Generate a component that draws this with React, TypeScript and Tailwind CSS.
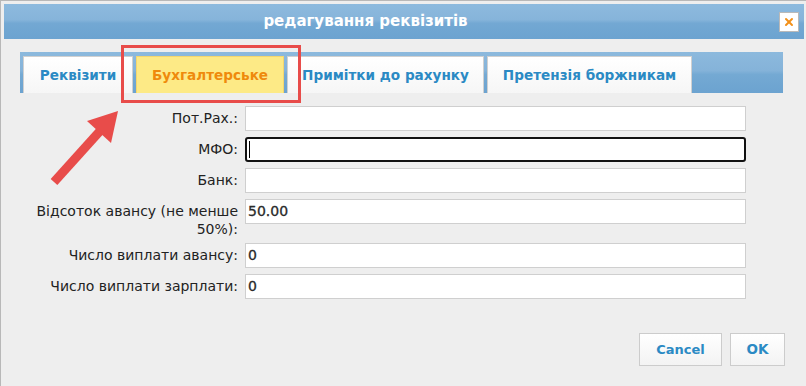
import React from "react";
import { X } from "lucide-react";

const tabs = [
  { label: "Реквізити", width: "w-[110px]", active: false },
  { label: "Бухгалтерське", width: "w-[148px]", active: true },
  { label: "Примітки до рахунку", width: "w-[197px]", active: false },
  { label: "Претензія боржникам", width: "w-[205px]", active: false },
];

type FieldProps = {
  label: React.ReactNode;
  value?: string;
  focused?: boolean;
  tall?: boolean;
};

const Field = ({ label, value, focused, tall }: FieldProps) => (
  <div className={`flex items-start ${tall ? "h-[38px]" : "h-[25px]"}`}>
    <div className="w-[234px] pt-[3px] text-right text-[14px] leading-[18px] text-[#222]">
      {label}
    </div>
    {focused ? (
      <div className="ml-[7px] flex h-[25px] w-[501px] items-center rounded-[3px] border-2 border-[#111] bg-white pl-[2px]">
        <span className="h-[17px] w-px bg-black" />
      </div>
    ) : (
      <div className="ml-[7px] flex h-[25px] w-[501px] items-center border border-[#cfcfcf] bg-white pl-[2px] text-[14px] text-[#2a2a2a] [-webkit-text-stroke:0.3px_#2a2a2a]">
        {value}
      </div>
    )}
  </div>
);

const App = () => {
  return (
    <div
      className="relative h-[386px] w-[806px] overflow-hidden border-l border-t border-[#b8b8b8] bg-[#eeeeee] pl-[3px] pt-[3px]"
      style={{ fontFamily: '"DejaVu Sans", Verdana, sans-serif' }}
    >
      {/* title bar */}
      <div className="flex h-[35px] w-[800px] items-center bg-[linear-gradient(to_bottom,#8dbade_0%,#86b4da_45%,#73a8d3_55%,#6ca3d0_100%)]">
        <div className="flex-1 pr-[52px] text-center text-[15px] font-bold text-white">
          редагування реквізитів
        </div>
        <div className="mr-[5px] flex h-[20px] w-[20px] items-center justify-center border border-[#b9b9b9] bg-white">
          <X className="h-[12px] w-[12px] text-[#f39019]" strokeWidth={4} />
        </div>
      </div>

      {/* tab strip */}
      <div className="ml-[16px] mt-[13px] flex h-[41px] w-[763px] items-end gap-[3px] bg-[linear-gradient(to_bottom,#8cb9dd_0%,#85b3d9_45%,#74a9d3_55%,#6ca3d0_100%)] pl-[3px]">
        {tabs.map((tab) => (
          <div
            key={tab.label}
            className={`flex h-[37px] ${tab.width} items-center justify-center border border-b-0 text-[13.6px] font-bold ${
              tab.active
                ? "border-[#f4d66d] bg-[#fdea86] text-[#ef8a0c]"
                : "border-[#d0d0d0] bg-[linear-gradient(to_bottom,#ffffff,#f6f6f6)] text-[#2b8ac4]"
            }`}
          >
            {tab.label}
          </div>
        ))}
      </div>

      {/* form */}
      <div className="mt-[13px] flex flex-col gap-[6px]">
        <Field label="Пот.Рах.:" />
        <Field label="МФО:" focused />
        <Field label="Банк:" />
        <Field
          label={
            <>
              Відсоток авансу (не менше
              <br />
              50%):
            </>
          }
          value="50.00"
          tall
        />
        <Field label="Число виплати авансу:" value="0" />
        <Field label="Число виплати зарплати:" value="0" />
      </div>

      {/* buttons */}
      <div className="mr-[21px] mt-[34px] flex justify-end gap-[8px]">
        <button className="h-[33px] w-[83px] border border-[#cccccc] bg-[linear-gradient(to_bottom,#ffffff,#f3f3f3)] text-[13px] font-bold text-[#2b8ac4]">
          Cancel
        </button>
        <button className="h-[33px] w-[55px] border border-[#cccccc] bg-[linear-gradient(to_bottom,#ffffff,#f3f3f3)] text-[13.5px] font-bold text-[#2b8ac4]">
          OK
        </button>
      </div>

      {/* annotation */}
      <div className="pointer-events-none absolute left-[120px] top-[44px] h-[58px] w-[180px] border-[3px] border-[#e84c4a]" />
      <svg
        className="pointer-events-none absolute left-0 top-0"
        width="806"
        height="386"
        viewBox="0 0 806 386"
      >
        <line x1="53" y1="181" x2="99" y2="130" stroke="#e84c4a" strokeWidth="9" />
        <polygon points="117,110 110,142 86,120" fill="#e84c4a" />
      </svg>
    </div>
  );
};

export default App;
